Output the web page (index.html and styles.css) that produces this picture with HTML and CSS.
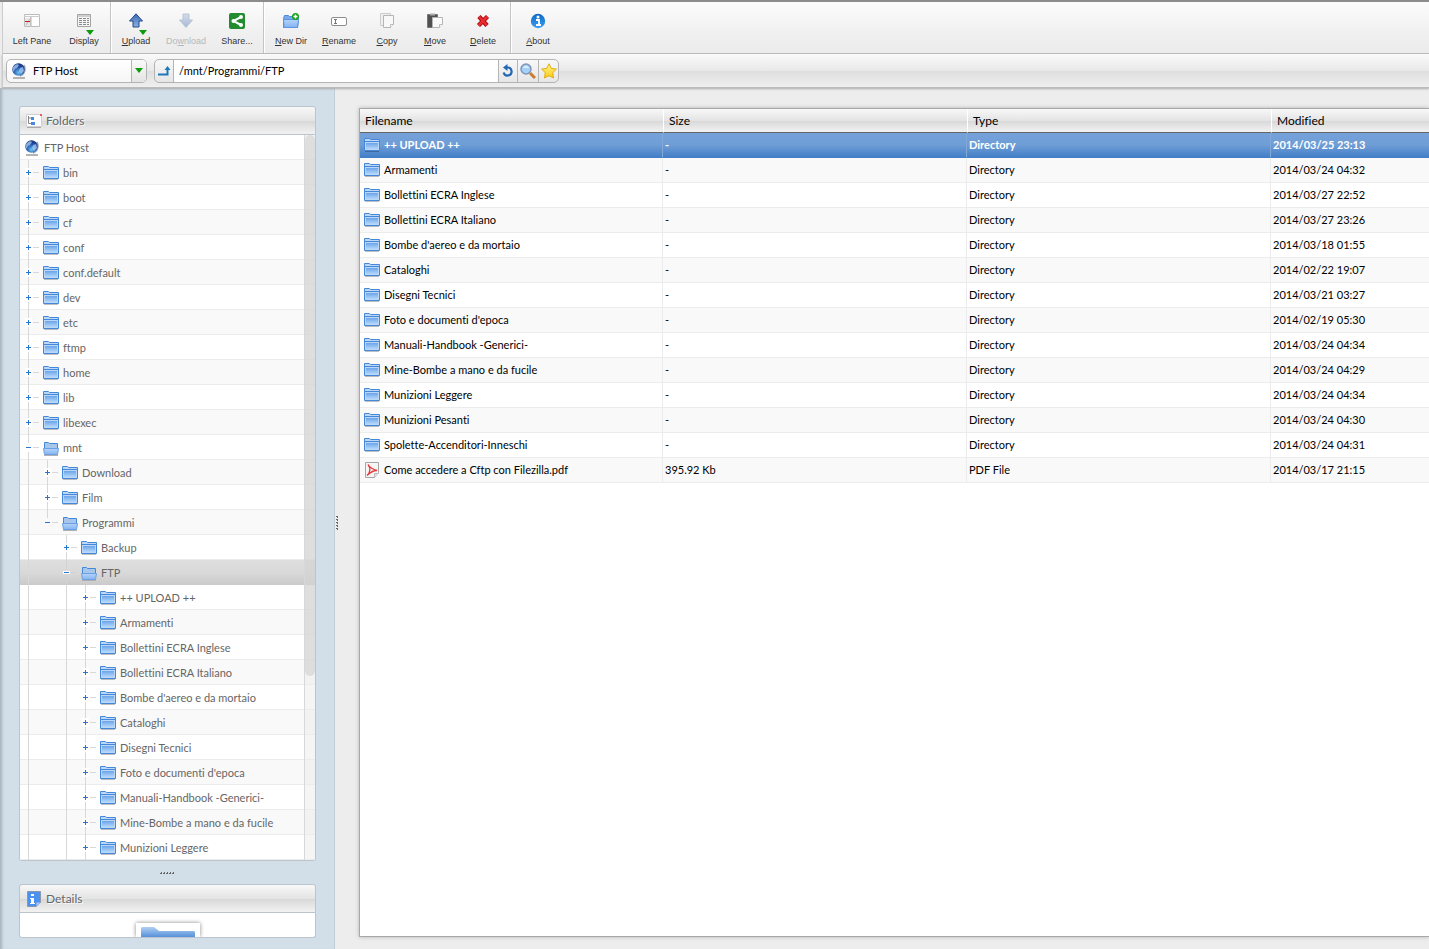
FILE: index.html
```html
<!DOCTYPE html>
<html lang="en">
<head>
<meta charset="utf-8">
<title>FTP Host - /mnt/Programmi/FTP</title>
<link rel="stylesheet" href="styles.css">
</head>
<body>
<svg class="defs" aria-hidden="true">
  <defs>
    <linearGradient id="gFolder" x1="0" y1="0" x2="0" y2="1"><stop offset="0" stop-color="#6aa5ea"/><stop offset="1" stop-color="#b4d6fb"/></linearGradient>
    <linearGradient id="gOpen" x1="0" y1="0" x2="0" y2="1"><stop offset="0" stop-color="#b4d4fa"/><stop offset="1" stop-color="#84b4f0"/></linearGradient>
    <linearGradient id="gBig" x1="0" y1="0" x2="0" y2="1"><stop offset="0" stop-color="#b2cff2"/><stop offset="1" stop-color="#5590da"/></linearGradient>
    <radialGradient id="gGlobe" cx=".5" cy=".75" r=".8"><stop offset="0" stop-color="#6ac4f4"/><stop offset=".5" stop-color="#2456ac"/><stop offset="1" stop-color="#142a74"/></radialGradient>
    <linearGradient id="gUp" x1="0" y1="0" x2="0" y2="1"><stop offset="0" stop-color="#3a68b4"/><stop offset="1" stop-color="#8cb0e0"/></linearGradient>
    <linearGradient id="gDown" x1="0" y1="0" x2="0" y2="1"><stop offset="0" stop-color="#d4dcec"/><stop offset="1" stop-color="#a8b8d4"/></linearGradient>
    <linearGradient id="gInfo" x1="0" y1="0" x2="0" y2="1"><stop offset="0" stop-color="#0c68c4"/><stop offset="1" stop-color="#3aa0f4"/></linearGradient>
    <linearGradient id="gStar" x1="0" y1="0" x2="0" y2="1"><stop offset="0" stop-color="#fff48c"/><stop offset="1" stop-color="#fccc14"/></linearGradient>
  </defs>
  <symbol id="folder" viewBox="0 0 16 16">
    <path d="M1 14.500h14" stroke="#000" stroke-opacity=".25"/>
    <path d="M.5 13.500V1.500h5l1 1h9v11z" fill="#bcd6f6" stroke="#4488dc"/>
    <path d="M1 4.500h14" stroke="#4488dc"/>
    <rect x="2" y="6" width="12" height="6" fill="url(#gFolder)"/>
  </symbol>
  <symbol id="open" viewBox="0 0 16 16">
    <path d="M1 15.500h14" stroke="#b0b0b0"/>
    <path d="M1.500 9V2.500h4l1 1h8V9z" fill="#a6c6ec" stroke="#4488dc"/>
    <path d="M.5 8.500h15l-1 6h-13z" fill="url(#gOpen)" stroke="#6ca0e4"/>
  </symbol>
  <symbol id="globe" viewBox="0 0 14 16">
    <path d="M1 15h12" stroke="#b4b4b4" stroke-width="2"/>
    <path d="M12 2c2 4 1 9-4 11" fill="none" stroke="#9aa4b4" stroke-width="1.500"/>
    <circle cx="6.500" cy="6.500" r="6.200" fill="url(#gGlobe)"/>
    <path d="M2 3c2-2 4-2 5-1L5 5 3 6 1.500 9C0 6 1 4 2 3zM8 5l3-1 1 4-3 3-2-3z" fill="#b4d6f6" opacity=".7"/>
  </symbol>
  <symbol id="line" viewBox="0 0 19 25"><path d="M8.500 0v25" stroke="#d8d8d8"/></symbol>
  <symbol id="plus" viewBox="0 0 19 25">
    <path d="M8.500 0v25M13 12.500h6" stroke="#d8d8d8"/><rect x="5" y="8" width="7" height="9" fill="#fff"/>
    <path d="M6 12.500h5M8.500 10v5" stroke="#2874d0"/>
  </symbol>
  <symbol id="minus" viewBox="0 0 19 25">
    <path d="M8.500 0v25M13 12.500h6" stroke="#d8d8d8"/><rect x="5" y="8" width="7" height="9" fill="#fff"/>
    <path d="M6 12.500h5" stroke="#2874d0"/>
  </symbol>
  <symbol id="lastminus" viewBox="0 0 19 25">
    <path d="M8.500 0v8M13 12.500h6" stroke="#d8d8d8"/><path d="M6 12.500h5" stroke="#2874d0"/>
  </symbol>
  <symbol id="selminus" viewBox="0 0 19 25">
    <path d="M8.500 0v9M8.500 16v9M13 12.500h6" stroke="#d2d2d2"/><path d="M5 12.500h7" stroke="#fff" stroke-width="3"/>
    <path d="M6 12.500h5" stroke="#2874d0"/>
  </symbol>
  <symbol id="pdf" viewBox="0 0 16 16">
    <path d="M1.500.5h13v10l-4 5h-9z" fill="#f6f6f6" stroke="#a4a4a4"/>
    <path d="M10.500 15.500v-4h4" fill="#ddd" stroke="#bbb"/>
    <path d="M4 2.500c2 3 5 5 9 6-4 0-7 2-10 5 3-3 4-7 1-11" fill="none" stroke="#e43c3c" stroke-width="1.300"/>
  </symbol>
  <symbol id="tri" viewBox="0 0 8 5"><path d="M0 0h8L4 5z" fill="#0c9c0c"/></symbol>
</svg>

<div class="app">
  <header class="toolbar">
    <div class="group first">
      <button class="tool wide"><svg viewBox="0 0 16 16"><path d="M.5 1.500h15v12H.5z" fill="#fff" stroke="#bcbcbc"/><path d="M0 3.500h16M6.500 4v10" stroke="#ccc"/><path d="M7 4v9" stroke="#b4b4b4"/><path d="M1 5h5v8H1z" fill="#e6e6e6"/><path d="M2 12l4-6" stroke="#bbb"/><path d="M1 8.500h5" stroke="#cc1818"/></svg><span>Left Pane</span></button>
      <button class="tool wide"><svg viewBox="0 0 16 16"><path d="M1.500 1.500h13v12h-13z" fill="#f6f6f6" stroke="#a4a4a4"/><path d="M1 3h14" stroke="#a8a8a8"/><path d="M3 5.500h3m1 0h3m1 0h2M3 7.500h3m1 0h3m1 0h2M3 9.500h3m1 0h3m1 0h2M3 11.500h3m1 0h3m1 0h2" stroke="#888"/></svg><svg class="drop"><use href="#tri"/></svg><span>Display</span></button>
    </div>
    <div class="group">
      <button class="tool mid"><svg viewBox="0 0 16 16"><path d="M8 .8L14.500 8H11v6H5V8H1.500z" fill="url(#gUp)" stroke="#22488c"/></svg><svg class="drop"><use href="#tri"/></svg><span><u>U</u>pload</span></button>
      <button class="tool mid" disabled><svg viewBox="0 0 16 16"><path d="M5 1h6v6h3.500L8 14.500 1.500 7H5z" fill="url(#gDown)" stroke="#b8c4d8"/></svg><span>Do<u>w</u>nload</span></button>
      <button class="tool wide"><svg viewBox="0 0 16 16"><rect width="16" height="16" rx="2" fill="#248c30"/><path d="M12 4L4.500 8l7.500 4" fill="none" stroke="#fff" stroke-width="2"/><circle cx="12" cy="4" r="2" fill="#fff"/><circle cx="4.500" cy="8" r="2" fill="#fff"/><circle cx="12" cy="12" r="2" fill="#fff"/></svg><span>Share...</span></button>
    </div>
    <div class="group pad">
      <button class="tool"><svg viewBox="0 0 16 16"><path d="M.5 14.500v-9l1-3h4l1 1h7v2h2l-1 9z" fill="#78aaf0" stroke="#4c88dc"/><path d="M.5 6.500h15l-1 8H1z" fill="url(#gOpen)" stroke="#5c94e4"/><circle cx="12.500" cy="3.500" r="3.500" fill="#14a014"/><path d="M10.500 3.500h4m-2-2v4" stroke="#fff" stroke-width="1.500"/></svg><span><u>N</u>ew Dir</span></button>
      <button class="tool"><svg viewBox="0 0 16 16"><rect x=".5" y="4.500" width="15" height="8" rx="1.500" fill="#fff" stroke="#8c8c8c"/><path d="M3 6.500h3M3 10.500h3M4.500 6.500v4" stroke="#777"/></svg><span><u>R</u>ename</span></button>
      <button class="tool"><svg viewBox="0 0 16 16"><path d="M1.500.5h10v12h-10z" fill="#f0f0f0" stroke="#ccc"/><path d="M4.500 2.500h10v9l-3 3h-7z" fill="#f8f8f8" stroke="#b4b4b4"/><path d="M11.500 14.500v-3h3" fill="#fff" stroke="#bbb"/></svg><span><u>C</u>opy</span></button>
      <button class="tool"><svg viewBox="0 0 16 16"><path d="M.5 1.500h10v13H.5z" fill="#505050" stroke="#777"/><path d="M3 1.500h5" stroke="#aaa" stroke-width="2"/><path d="M5.500 4.500h10v7l-3 3h-7z" fill="#fafafa" stroke="#b4b4b4"/><path d="M12.500 14.500v-3h3" fill="#fff" stroke="#bbb"/></svg><span><u>M</u>ove</span></button>
      <button class="tool"><svg viewBox="0 0 16 16"><path d="M4 3.500l8 9M12.500 3.500l-9 9" stroke="#a80c14" stroke-width="4.500"/><path d="M4 3.500l8 9M12.500 3.500l-9 9" stroke="#e82c30" stroke-width="2.500"/></svg><span><u>D</u>elete</span></button>
    </div>
    <div class="group pad">
      <button class="tool"><svg viewBox="0 0 16 16"><circle cx="8" cy="8" r="7.200" fill="url(#gInfo)"/><circle cx="8" cy="4" r="1.500" fill="#fff"/><path d="M6 7h3v5M6 12h5" fill="none" stroke="#fff" stroke-width="1.800"/></svg><span><u>A</u>bout</span></button>
    </div>
  </header>

  <nav class="location">
    <label class="host"><svg class="globe"><use href="#globe"/></svg>
      <select aria-label="Repository"><option>FTP Host</option></select>
      <span class="arrow"><svg><use href="#tri"/></svg></span></label>
    <div class="path">
      <button class="pbtn up" aria-label="Parent folder"><svg viewBox="0 0 16 16"><path d="M2 11.500h9.500V5" fill="none" stroke="#1c78b8" stroke-width="2"/><path d="M8.500 7l3-4 3 4z" fill="#1c78b8"/></svg></button>
      <input type="text" aria-label="Path" value="/mnt/Programmi/FTP">
      <button class="pbtn" aria-label="Refresh"><svg viewBox="0 0 16 16"><path d="M6 4.500h1.500a4 4 0 1 1-3.800 5" fill="none" stroke="#2468b4" stroke-width="2.200"/><path d="M3 4.500L7.500 1v7z" fill="#2468b4"/></svg></button>
      <button class="pbtn mid" aria-label="Search"><svg viewBox="0 0 16 16"><path d="M10 10l5 5" stroke="#c87c2c" stroke-width="3"/><circle cx="6" cy="6" r="5" fill="#a4d0fa" stroke="#8494b4" stroke-width="1.500"/><path d="M3 5c2-3 5-2 6 0z" fill="#ddf0ff"/></svg></button>
      <button class="pbtn" aria-label="Bookmark"><svg viewBox="0 0 16 16"><path d="M8 .8l2.300 4.600 5.100.7-3.700 3.600.9 5.300L8 12.700 3.400 15l.9-5.300L.6 6.100l5.100-.7z" fill="url(#gStar)" stroke="#e0ac14"/></svg></button>
    </div>
  </nav>

  <div class="body">
    <aside class="side">
      <section class="panel grow">
        <h2><svg viewBox="0 0 16 16"><path d="M.5 1.500h15v12H.5z" fill="#fff" stroke="#d0d0d4"/><path d="M1 14.500h14" stroke="#aaa"/><path d="M2.500 3v7.500H5M2.500 5H5" fill="none" stroke="#888"/><path d="M5 4h3v3H5zM5 9h4v3H5z" fill="#4888e0"/><path d="M14 1h2v2h-2z" fill="#e06060"/></svg>Folders</h2>
        <div class="tree">
          <ul>
            <li class="root"><svg class="globe"><use href="#globe"/></svg>FTP Host</li>
            <li><svg class="n"><use href="#plus"/></svg><svg class="i"><use href="#folder"/></svg>bin</li>
            <li><svg class="n"><use href="#plus"/></svg><svg class="i"><use href="#folder"/></svg>boot</li>
            <li><svg class="n"><use href="#plus"/></svg><svg class="i"><use href="#folder"/></svg>cf</li>
            <li><svg class="n"><use href="#plus"/></svg><svg class="i"><use href="#folder"/></svg>conf</li>
            <li><svg class="n"><use href="#plus"/></svg><svg class="i"><use href="#folder"/></svg>conf.default</li>
            <li><svg class="n"><use href="#plus"/></svg><svg class="i"><use href="#folder"/></svg>dev</li>
            <li><svg class="n"><use href="#plus"/></svg><svg class="i"><use href="#folder"/></svg>etc</li>
            <li><svg class="n"><use href="#plus"/></svg><svg class="i"><use href="#folder"/></svg>ftmp</li>
            <li><svg class="n"><use href="#plus"/></svg><svg class="i"><use href="#folder"/></svg>home</li>
            <li><svg class="n"><use href="#plus"/></svg><svg class="i"><use href="#folder"/></svg>lib</li>
            <li><svg class="n"><use href="#plus"/></svg><svg class="i"><use href="#folder"/></svg>libexec</li>
            <li><svg class="n"><use href="#minus"/></svg><svg class="i"><use href="#open"/></svg>mnt</li>
            <li><svg class="n"><use href="#line"/></svg><svg class="n"><use href="#plus"/></svg><svg class="i"><use href="#folder"/></svg>Download</li>
            <li><svg class="n"><use href="#line"/></svg><svg class="n"><use href="#plus"/></svg><svg class="i"><use href="#folder"/></svg>Film</li>
            <li><svg class="n"><use href="#line"/></svg><svg class="n"><use href="#lastminus"/></svg><svg class="i"><use href="#open"/></svg>Programmi</li>
            <li><svg class="n"><use href="#line"/></svg><svg class="n"></svg><svg class="n"><use href="#plus"/></svg><svg class="i"><use href="#folder"/></svg>Backup</li>
            <li class="sel"><svg class="n"><use href="#line"/></svg><svg class="n"></svg><svg class="n"><use href="#selminus"/></svg><svg class="i"><use href="#open"/></svg>FTP</li>
            <li><svg class="n"><use href="#line"/></svg><svg class="n"></svg><svg class="n"><use href="#line"/></svg><svg class="n"><use href="#plus"/></svg><svg class="i"><use href="#folder"/></svg>++ UPLOAD ++</li>
            <li><svg class="n"><use href="#line"/></svg><svg class="n"></svg><svg class="n"><use href="#line"/></svg><svg class="n"><use href="#plus"/></svg><svg class="i"><use href="#folder"/></svg>Armamenti</li>
            <li><svg class="n"><use href="#line"/></svg><svg class="n"></svg><svg class="n"><use href="#line"/></svg><svg class="n"><use href="#plus"/></svg><svg class="i"><use href="#folder"/></svg>Bollettini ECRA Inglese</li>
            <li><svg class="n"><use href="#line"/></svg><svg class="n"></svg><svg class="n"><use href="#line"/></svg><svg class="n"><use href="#plus"/></svg><svg class="i"><use href="#folder"/></svg>Bollettini ECRA Italiano</li>
            <li><svg class="n"><use href="#line"/></svg><svg class="n"></svg><svg class="n"><use href="#line"/></svg><svg class="n"><use href="#plus"/></svg><svg class="i"><use href="#folder"/></svg>Bombe d'aereo e da mortaio</li>
            <li><svg class="n"><use href="#line"/></svg><svg class="n"></svg><svg class="n"><use href="#line"/></svg><svg class="n"><use href="#plus"/></svg><svg class="i"><use href="#folder"/></svg>Cataloghi</li>
            <li><svg class="n"><use href="#line"/></svg><svg class="n"></svg><svg class="n"><use href="#line"/></svg><svg class="n"><use href="#plus"/></svg><svg class="i"><use href="#folder"/></svg>Disegni Tecnici</li>
            <li><svg class="n"><use href="#line"/></svg><svg class="n"></svg><svg class="n"><use href="#line"/></svg><svg class="n"><use href="#plus"/></svg><svg class="i"><use href="#folder"/></svg>Foto e documenti d'epoca</li>
            <li><svg class="n"><use href="#line"/></svg><svg class="n"></svg><svg class="n"><use href="#line"/></svg><svg class="n"><use href="#plus"/></svg><svg class="i"><use href="#folder"/></svg>Manuali-Handbook -Generici-</li>
            <li><svg class="n"><use href="#line"/></svg><svg class="n"></svg><svg class="n"><use href="#line"/></svg><svg class="n"><use href="#plus"/></svg><svg class="i"><use href="#folder"/></svg>Mine-Bombe a mano e da fucile</li>
            <li><svg class="n"><use href="#line"/></svg><svg class="n"></svg><svg class="n"><use href="#line"/></svg><svg class="n"><use href="#plus"/></svg><svg class="i"><use href="#folder"/></svg>Munizioni Leggere</li>
          </ul>
          <div class="track"><div class="thumb"></div></div>
        </div>
      </section>
      <div class="grip"><svg viewBox="0 0 15 2"><path d="M0 1h1V0h1v2H0zM3 1h1V0h1v2H3zM6 1h1V0h1v2H6zM9 1h1V0h1v2H9zM12 1h1V0h1v2h-2z" fill="#666"/></svg></div>
      <section class="panel">
        <h2><svg viewBox="0 0 16 16"><path d="M1.500.5h13v11l-4 4h-9z" fill="#4c90f0" stroke="#8c98a8"/><path d="M10.500 15.500v-4h4z" fill="#a8ccfa"/><path d="M5 3h3v2H5zM4 7h4v5h1v1H4v-1h1V8H4z" fill="#fff"/></svg>Details</h2>
        <div class="preview"><div class="thumbnail"><svg viewBox="0 0 54 10"><path d="M0 1l1-1h12l5 4h35l1 1v5H0z" fill="url(#gBig)"/></svg></div></div>
      </section>
    </aside>

    <main class="main">
      <div class="vgrip"><svg viewBox="0 0 2 14"><path d="M0 1V0h2v2H1V1zM0 4V3h2v2H1V4zM0 7V6h2v2H1V7zM0 10V9h2v2H1v-1zM0 13v-1h2v2H1v-1z" fill="#666"/></svg></div>
      <div class="files">
        <table>
          <colgroup><col class="cname"><col class="csize"><col class="csize"><col></colgroup>
          <thead><tr><th>Filename</th><th>Size</th><th>Type</th><th>Modified</th></tr></thead>
          <tbody>
            <tr class="sel"><td><div class="name"><svg><use href="#folder"/></svg>++ UPLOAD ++</div></td><td>-</td><td>Directory</td><td>2014/03/25 23:13</td></tr>
            <tr><td><div class="name"><svg><use href="#folder"/></svg>Armamenti</div></td><td>-</td><td>Directory</td><td>2014/03/24 04:32</td></tr>
            <tr><td><div class="name"><svg><use href="#folder"/></svg>Bollettini ECRA Inglese</div></td><td>-</td><td>Directory</td><td>2014/03/27 22:52</td></tr>
            <tr><td><div class="name"><svg><use href="#folder"/></svg>Bollettini ECRA Italiano</div></td><td>-</td><td>Directory</td><td>2014/03/27 23:26</td></tr>
            <tr><td><div class="name"><svg><use href="#folder"/></svg>Bombe d'aereo e da mortaio</div></td><td>-</td><td>Directory</td><td>2014/03/18 01:55</td></tr>
            <tr><td><div class="name"><svg><use href="#folder"/></svg>Cataloghi</div></td><td>-</td><td>Directory</td><td>2014/02/22 19:07</td></tr>
            <tr><td><div class="name"><svg><use href="#folder"/></svg>Disegni Tecnici</div></td><td>-</td><td>Directory</td><td>2014/03/21 03:27</td></tr>
            <tr><td><div class="name"><svg><use href="#folder"/></svg>Foto e documenti d'epoca</div></td><td>-</td><td>Directory</td><td>2014/02/19 05:30</td></tr>
            <tr><td><div class="name"><svg><use href="#folder"/></svg>Manuali-Handbook -Generici-</div></td><td>-</td><td>Directory</td><td>2014/03/24 04:34</td></tr>
            <tr><td><div class="name"><svg><use href="#folder"/></svg>Mine-Bombe a mano e da fucile</div></td><td>-</td><td>Directory</td><td>2014/03/24 04:29</td></tr>
            <tr><td><div class="name"><svg><use href="#folder"/></svg>Munizioni Leggere</div></td><td>-</td><td>Directory</td><td>2014/03/24 04:34</td></tr>
            <tr><td><div class="name"><svg><use href="#folder"/></svg>Munizioni Pesanti</div></td><td>-</td><td>Directory</td><td>2014/03/24 04:30</td></tr>
            <tr><td><div class="name"><svg><use href="#folder"/></svg>Spolette-Accenditori-Inneschi</div></td><td>-</td><td>Directory</td><td>2014/03/24 04:31</td></tr>
            <tr><td><div class="name"><svg><use href="#pdf"/></svg>Come accedere a Cftp con Filezilla.pdf</div></td><td>395.92 Kb</td><td>PDF File</td><td>2014/03/17 21:15</td></tr>
          </tbody>
        </table>
      </div>
    </main>
  </div>
</div>
</body>
</html>
```

FILE: styles.css
```css
* { box-sizing: border-box; }
body { margin: 0; background: #ededed; font: 11px/16px "Trebuchet MS", Lato, sans-serif; font-variant-ligatures: none; color: #000; }
button, input, select { margin: 0; padding: 0; border: 0; background: none; font: inherit; color: inherit; }
svg { display: block; flex: none; width: 16px; height: 16px; }
.defs { position: absolute; width: 0; height: 0; }
.app { display: flex; flex-direction: column; height: 100vh; overflow: hidden; border-top: 2px solid #8c8c8c; }

.toolbar { display: flex; flex: none; height: 52px; margin-left: 2px; border-left: 1px solid #ccc; border-bottom: 1px solid #bcbcbc; background: linear-gradient(#fcfcfc, #f0f0f0 60%, #ebebeb); }
.group { display: flex; border-right: 1px solid #c4c4c4; box-shadow: 1px 0 #fff; }
.group.first { padding-left: 3px; }
.group.pad { padding: 0 3px; }
.group:last-child { border: 0; box-shadow: none; }
.tool { display: flex; flex-direction: column; align-items: center; width: 48px; padding-top: 11px; position: relative; font: 9px/12px "Liberation Sans", Arial, sans-serif; color: #333; gap: 6px; white-space: nowrap; }
.tool.wide { width: 52px; }
.tool.mid { width: 50px; }
.tool:disabled { color: #b8b8b8; }
.tool .drop { position: absolute; left: 28px; top: 28px; width: 8px; height: 5px; }

.location { display: flex; flex: none; align-items: center; gap: 7px; height: 34px; margin-left: 2px; padding-left: 3px; border-left: 1px solid #ccc; border-bottom: 1px solid #bbb; background: linear-gradient(#fafafa, #e9e9e9 50%, #dedede 51%, #efefef); box-shadow: 0 1px 2px #aaa; position: relative; }
.host, .path { display: flex; align-items: stretch; height: 24px; border: 1px solid #b4b4b4; border-radius: 5px; background: #fff; overflow: hidden; }
.host { width: 141px; align-items: center; padding-left: 5px; background: linear-gradient(#fff, #f6f6f6); }
.globe { width: 14px; height: 16px; }
.host select { flex: 1; min-width: 0; padding-left: 7px; appearance: none; outline: 0; }
.arrow { display: flex; align-items: center; justify-content: center; align-self: stretch; width: 15px; border-left: 1px solid #b4b4b4; background: linear-gradient(#fafafa, #e4e4e4); }
.arrow svg { width: 8px; height: 5px; }
.path { width: 405px; background: linear-gradient(#f8f8f8, #e6e6e6); }
.path input { flex: 1; min-width: 0; padding-left: 5px; border-left: 1px solid #b4b4b4; background: #fff; outline: 0; }
.pbtn { display: flex; align-items: center; justify-content: center; width: 19px; }
.pbtn.up { width: 18px; }
.pbtn.mid { width: 21px; }
.path input ~ .pbtn { border-left: 1px solid #b4b4b4; }
.path input ~ .pbtn:last-child { width: 20px; }

.body { display: flex; flex: 1; min-height: 0; }
.side { display: flex; flex-direction: column; flex: none; width: 335px; padding: 18px 18px 11px 19px; background: #d2dee8; border-right: 1px solid #c0ccd6; box-shadow: inset 4px 0 3px -2px #a8b2bc; color: #666; }
.panel { border-radius: 3px; flex: none; }
.panel.grow { display: flex; flex-direction: column; flex: 1; min-height: 0; }
.panel h2 { display: flex; align-items: center; gap: 4px; height: 29px; margin: 0; padding-left: 6px; border: 1px solid #bcc4cc; border-radius: 3px 3px 0 0; background: linear-gradient(#f8f8f8, #e4e4e4 50%, #d8d8d8 52%, #f2f2f2); font-size: 12px; font-weight: normal; text-shadow: 1px 1px 1px #fff; }
.tree { display: flex; flex: 1; min-height: 0; border: 1px solid #bcc4cc; border-top: 0; border-radius: 0 0 3px 3px; background: #fff; overflow: hidden; position: relative; }
.tree ul { flex: 1; min-width: 0; margin: 0; padding: 0; list-style: none; }
.tree li { display: flex; align-items: center; height: 25px; background: linear-gradient(#ececec, #ececec) bottom / 100% 1px no-repeat #fff; white-space: nowrap; }
.tree li:nth-child(even) { background-color: #f9f9f9; }
.tree li.sel { background: linear-gradient(#dedede, #d9d9d9 50%, #cacaca); }
.tree li.root { padding-left: 5px; gap: 5px; }
.n { width: 19px; height: 25px; }
.i { margin: 0 4px; }
.track { position: absolute; top: 0; right: 0; bottom: 0; width: 11px; border-left: 1px solid #d8d8d8; background: rgba(235, 235, 235, .5); }
.thumb { height: 541px; border-radius: 5px; background: rgba(200, 200, 200, .5); }
.grip { display: flex; flex: none; align-items: center; justify-content: center; height: 23px; }
.grip svg { width: 15px; height: 2px; }
.preview { display: flex; justify-content: center; align-items: flex-end; height: 25px; border: 1px solid #bcc4cc; border-top: 0; border-radius: 0 0 3px 3px; background: #fff; overflow: hidden; }
.thumbnail { padding: 4px 5px 0; background: #fff; box-shadow: 0 0 4px #888; }
.thumbnail svg { width: 54px; height: 10px; }

.main { display: flex; flex: 1; min-width: 0; padding: 20px 0 12px; }
.vgrip { display: flex; flex: none; align-items: center; width: 24px; padding-left: 1px; }
.vgrip svg { width: 2px; height: 14px; }
.files { flex: 1; min-width: 0; border: 1px solid #a8a8a8; border-right: 0; background: #fff; box-shadow: 0 0 4px #b4b4b4; }
table { width: 100%; border-collapse: separate; border-spacing: 0; table-layout: fixed; }
.cname { width: 303px; }
.csize { width: 304px; }
th { height: 24px; padding: 0 0 0 5px; text-align: left; font-size: 12px; font-weight: normal; border-bottom: 1px solid #666; background: linear-gradient(#f8f8f8, #e4e4e4 50%, #d8d8d8 52%, #f2f2f2); }
th + th { border-left: 1px solid #fff; }
td { height: 25px; padding: 0 2px; border-right: 1px solid #ececec; border-bottom: 1px solid #ececec; }
td:last-child { border-right: 0; }
tbody tr:nth-child(even) { background: #f9f9f9; }
td:first-child { padding-left: 4px; }
.name { display: flex; align-items: center; gap: 4px; }
tr.sel { color: #fff; font-weight: bold; }
tr.sel td { border-right-color: #84a8d8; border-bottom-color: #4480c8; background: linear-gradient(#75a2da, #6f9dd6 50%, #4480c8); }
```
